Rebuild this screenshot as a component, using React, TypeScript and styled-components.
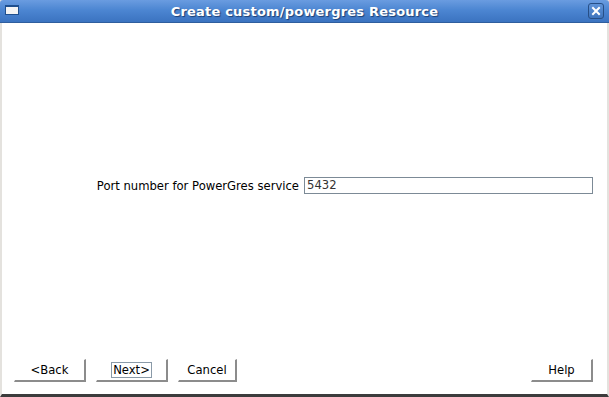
import React from 'react'
import styled, { createGlobalStyle } from 'styled-components'

const GlobalStyle = createGlobalStyle`
    html, body {
        margin: 0;
        padding: 0;
        background: #ffffff;
    }
    #root {
        width: 609px;
        height: 397px;
    }
`

const Window = styled.div`
    display: flex;
    flex-direction: column;
    width: 609px;
    height: 397px;
    box-sizing: border-box;
    background: #ffffff;
    border-left: 2px solid #e4e2de;
    border-right: 2px solid #e4e2de;
    border-bottom: 3px solid #3c3c3c;
    font-family: "DejaVu Sans", Verdana, sans-serif;
`

const TitleBar = styled.div`
    position: relative;
    display: flex;
    align-items: center;
    justify-content: center;
    height: 22px;
    margin: 0 -2px;
    background: linear-gradient(to bottom, #6a9ce0 0%, #4c86d2 45%, #3b73c0 100%);
    border-bottom: 1px solid #2f5e9e;
    border-radius: 3px 3px 0 0;
`

const Title = styled.span`
    color: #ffffff;
    font-size: 13px;
    font-weight: bold;
    letter-spacing: 0.2px;
    text-shadow: 1px 1px 1px #1c3f74;
`

const MenuIcon = styled.div`
    position: absolute;
    left: 5px;
    top: 5px;
    width: 14px;
    height: 10px;
    box-sizing: border-box;
    background: #f4f4f4;
    border: 1px solid #1f4f8e;
    border-top: 2px solid #1f4f8e;
`

const CloseButton = styled.div`
    position: absolute;
    right: 5px;
    top: 3px;
    width: 16px;
    height: 16px;
    box-sizing: border-box;
    display: flex;
    align-items: center;
    justify-content: center;
    border: 1px solid #274f86;
    border-radius: 3px;
    background: linear-gradient(to bottom, #5f93d8, #3e74bd);
`

const Body = styled.div`
    flex: 1;
    display: flex;
    align-items: center;
    justify-content: flex-end;
    padding: 0 14px 11px 14px;
`

const FieldRow = styled.div`
    display: flex;
    align-items: center;
    gap: 5px;
`

const Label = styled.label`
    color: #000000;
    font-size: 11.6px;
    white-space: nowrap;
`

const TextField = styled.div`
    width: 289px;
    height: 17px;
    box-sizing: border-box;
    border: 1px solid #7c8a96;
    padding: 0 2px;
    font-size: 11.6px;
    line-height: 15px;
    color: #333333;
`

const Footer = styled.div`
    display: flex;
    align-items: flex-end;
    gap: 10px;
    padding: 0 14px 12px 12px;
`

const Spacer = styled.div`
    flex: 1;
`

const Button = styled.div<{ $width: number }>`
    width: ${p => p.$width}px;
    height: 23px;
    box-sizing: border-box;
    display: flex;
    align-items: center;
    justify-content: center;
    border-top: 1px solid #ffffff;
    border-left: 1px solid #ffffff;
    border-right: 2px solid #8c8c8c;
    border-bottom: 2px solid #8c8c8c;
    font-size: 11.6px;
    color: #000000;
    background: #ffffff;
`

const Focus = styled.span`
    border: 1px solid #8a9aa8;
    padding: 0 1px;
    line-height: 14px;
`

export default function App() {
    return (
        <>
            <GlobalStyle />
            <Window>
                <TitleBar>
                    <MenuIcon />
                    <Title>Create custom/powergres Resource</Title>
                    <CloseButton>
                        <svg width="10" height="10" viewBox="0 0 10 10">
                            <path d="M2 2 L8 8 M8 2 L2 8" stroke="#ffffff" strokeWidth="2" strokeLinecap="square" />
                        </svg>
                    </CloseButton>
                </TitleBar>
                <Body>
                    <FieldRow>
                        <Label>Port number for PowerGres service</Label>
                        <TextField>5432</TextField>
                    </FieldRow>
                </Body>
                <Footer>
                    <Button $width={72}>&lt;Back</Button>
                    <Button $width={72}><Focus>Next&gt;</Focus></Button>
                    <Button $width={59}>Cancel</Button>
                    <Spacer />
                    <Button $width={62}>Help</Button>
                </Footer>
            </Window>
        </>
    )
}
